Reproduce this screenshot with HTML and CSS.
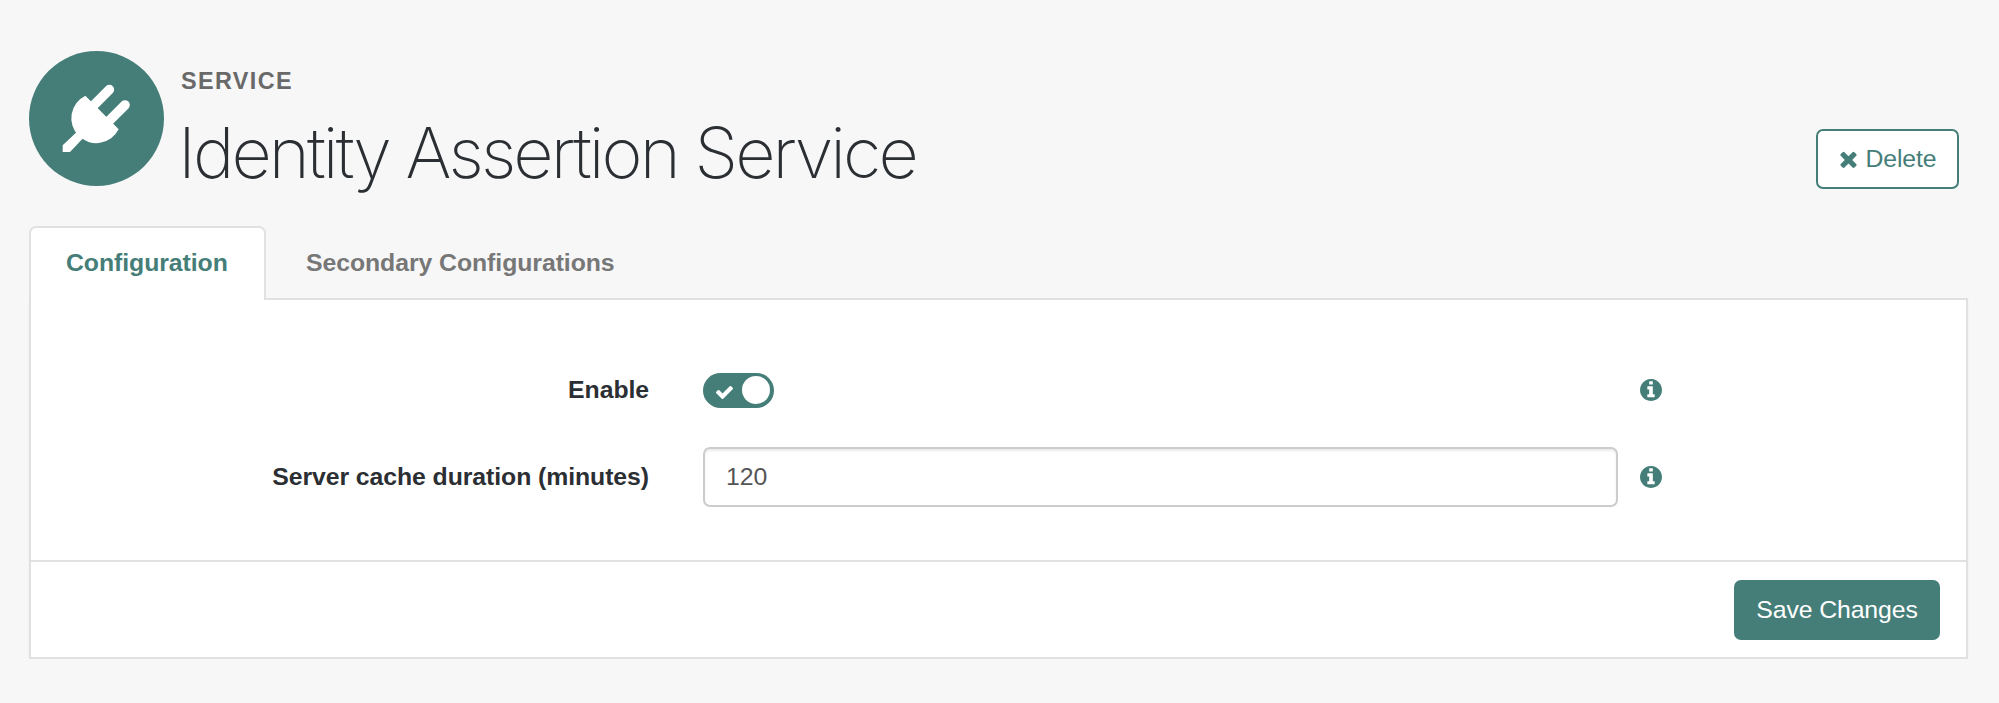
FILE: index.html
```html
<!DOCTYPE html>
<html lang="en">
<head>
<meta charset="utf-8">
<title>Identity Assertion Service</title>
<link rel="stylesheet" href="styles.css">
</head>
<body>
<svg width="0" height="0" class="defs">
  <symbol id="info" viewBox="128 128 1536 1536"><path d="M1152 1376v-160q0-14-9-23t-23-9h-96v-512q0-14-9-23t-23-9h-320q-14 0-23 9t-9 23v160q0 14 9 23t23 9h96v320h-96q-14 0-23 9t-9 23v160q0 14 9 23t23 9h448q14 0 23-9t9-23zm-128-896v-160q0-14-9-23t-23-9h-192q-14 0-23 9t-9 23v160q0 14 9 23t23 9h192q14 0 23-9t9-23zm640 416q0 209-103 385.5t-279.5 279.5-385.5 103-385.5-103-279.5-279.5-103-385.5 103-385.5 279.5-279.5 385.5-103 385.5 103 279.5 279.5 103 385.5z"/></symbol>
</svg>
<header class="page-header">
  <div class="badge">
    <svg viewBox="0 0 405 405" fill="#fff">
      <path d="M169 134A75 75 0 1 0 269 235Z"/>
      <path d="M144 242L101 283V303H123L162 262Z"/>
      <path d="M241 116L185 172M288 162L232 218" stroke="#fff" stroke-width="29" stroke-linecap="round"/>
    </svg>
  </div>
  <div class="titles">
    <div class="kind">SERVICE</div>
    <h1 class="name">Identity Assertion Service</h1>
  </div>
  <button class="btn btn-outline">
    <svg class="icon-x" viewBox="302 238 1188 1316"><path d="M1490 1322q0 40-28 68l-136 136q-28 28-68 28t-68-28l-294-294-294 294q-28 28-68 28t-68-28l-136-136q-28-28-28-68t28-68l294-294-294-294q-28-28-28-68t28-68l136-136q28-28 68-28t68 28l294 294 294-294q28-28 68-28t68 28l136 136q28 28 28 68t-28 68l-294 294 294 294q28 28 28 68z"/></svg>
    <span>Delete</span>
  </button>
</header>
<nav class="tabs">
  <a class="tab active">Configuration</a>
  <a class="tab">Secondary Configurations</a>
</nav>
<main class="panel">
  <form class="form">
    <div class="row row-toggle">
      <label class="label">Enable</label>
      <div class="control">
        <span class="toggle">
          <svg class="icon-check" viewBox="121 334 1550 1188"><path d="M1671 566q0 40-28 68l-724 724-136 136q-28 28-68 28t-68-28l-136-136-362-362q-28-28-28-68t28-68l136-136q28-28 68-28t68 28l294 295 656-657q28-28 68-28t68 28l136 136q28 28 28 68z"/></svg>
          <span class="knob"></span>
        </span>
      </div>
      <svg class="info"><use href="#info"/></svg>
    </div>
    <div class="row">
      <label class="label">Server cache duration (minutes)</label>
      <div class="control"><input class="input" type="text" value="120"></div>
      <svg class="info"><use href="#info"/></svg>
    </div>
  </form>
  <footer class="footer"><button class="btn btn-primary">Save Changes</button></footer>
</main>
</body>
</html>
```
FILE: styles.css
```css
* { box-sizing: border-box; }
body {
  margin: 0;
  padding: 51px 31px 0 29px;
  background: #f7f7f7;
  color: #2b2f33;
  font: 24.8px/1.43 "Liberation Sans", Arial, sans-serif;
}
.defs { display: block; height: 0; }
.page-header { display: flex; height: 175px; }
.badge {
  flex: none;
  width: 135px;
  height: 135px;
  border-radius: 50%;
  background: #457e78;
}
.badge svg { display: block; width: 100%; height: 100%; }
.titles { flex: 1; padding: 12px 0 0 17px; }
.kind {
  font-weight: bold;
  font-size: 23.4px;
  line-height: 36px;
  letter-spacing: 1.4px;
  color: #696969;
}
.name {
  margin: 8px 0 0 -3px;
  font: 200 70px/92px Inter, "Liberation Sans", sans-serif;
  letter-spacing: -2.92px;
  color: #2b2f33;
  white-space: nowrap;
}
.btn {
  display: flex;
  align-items: center;
  justify-content: center;
  height: 60px;
  border-radius: 7px;
  font: 24.8px/1 "Liberation Sans", Arial, sans-serif;
  letter-spacing: -0.1px;
  white-space: nowrap;
}
.btn-outline {
  width: 143px;
  margin: 78px 9px 0 0;
  padding: 0 0 0 2px;
  gap: 8px;
  border: 2px solid #457e78;
  background: #fff;
  color: #457e78;
}
.icon-x { width: 17px; height: 18px; fill: #457e78; }
.btn-primary { width: 206px; padding: 0; border: 0; background: #457e78; color: #fff; }
.tabs { display: flex; height: 74px; }
.tab {
  padding: 1px 37px 0 40px;
  height: 72px;
  line-height: 72px;
  font-weight: bold;
  letter-spacing: -0.06px;
  color: #777;
}
.tab.active {
  width: 237px;
  height: 74px;
  padding: 0 0 0 35px;
  position: relative;
  z-index: 1;
  border: 2px solid #e1e1e1;
  border-bottom: 0;
  border-radius: 7px 7px 0 0;
  background: #fff;
  color: #457e78;
  line-height: 70px;
}
.panel {
  margin-top: -2px;
  height: 361px;
  border: 2px solid #e1e1e1;
  background: #fff;
  box-shadow: 0 2px 2px rgba(0, 0, 0, .04);
}
.form { height: 260px; padding-top: 60px; }
.row {
  display: grid;
  grid-template-columns: 618px 969px 44px;
  align-items: center;
  height: 60px;
}
.row-toggle { margin-bottom: 27px; }
.label {
  font-weight: bold;
  letter-spacing: -0.07px;
  text-align: right;
  white-space: nowrap;
}
.control { margin-left: 54px; }
.toggle {
  display: flex;
  align-items: center;
  justify-content: space-between;
  width: 71px;
  height: 35px;
  padding: 0 4px 0 13px;
  border-radius: 18px;
  background: #457e78;
}
.icon-check { width: 17px; height: 13px; margin-top: 4px; fill: #fff; }
.knob { width: 28px; height: 28px; border-radius: 50%; background: #fff; }
.input {
  display: block;
  width: 915px;
  height: 60px;
  padding: 0 21px;
  border: 2px solid #ccc;
  border-radius: 7px;
  background: #fff;
  box-shadow: inset 0 2px 2px rgba(0, 0, 0, .075);
  color: #555;
  font: 24.8px "Liberation Sans", Arial, sans-serif;
}
.info { width: 22px; height: 22px; margin-left: 22px; fill: #457e78; }
.footer {
  display: flex;
  justify-content: flex-end;
  height: 97px;
  padding: 18px 26px 0 0;
  border-top: 2px solid #e1e1e1;
}
```
